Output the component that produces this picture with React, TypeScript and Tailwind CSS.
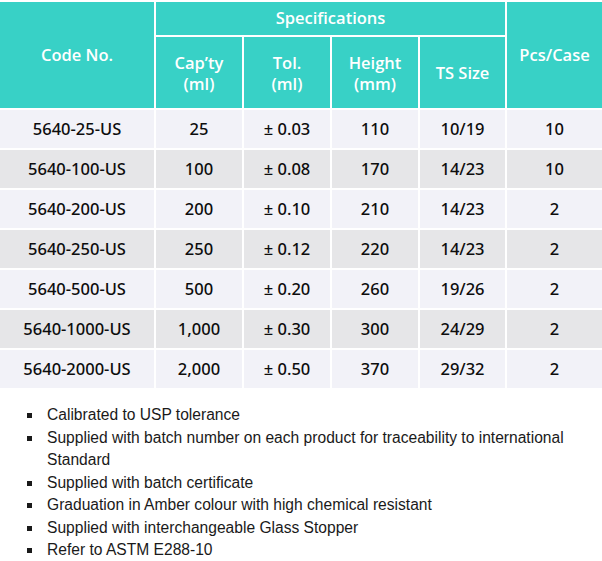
import React from 'react';

type Row = {
    code: string;
    cap: string;
    tol: string;
    height: string;
    ts: string;
    pcs: string;
};

const rows: Row[] = [
    { code: '5640-25-US', cap: '25', tol: '± 0.03', height: '110', ts: '10/19', pcs: '10' },
    { code: '5640-100-US', cap: '100', tol: '± 0.08', height: '170', ts: '14/23', pcs: '10' },
    { code: '5640-200-US', cap: '200', tol: '± 0.10', height: '210', ts: '14/23', pcs: '2' },
    { code: '5640-250-US', cap: '250', tol: '± 0.12', height: '220', ts: '14/23', pcs: '2' },
    { code: '5640-500-US', cap: '500', tol: '± 0.20', height: '260', ts: '19/26', pcs: '2' },
    { code: '5640-1000-US', cap: '1,000', tol: '± 0.30', height: '300', ts: '24/29', pcs: '2' },
    { code: '5640-2000-US', cap: '2,000', tol: '± 0.50', height: '370', ts: '29/32', pcs: '2' },
];

const notes = [
    'Calibrated to USP tolerance',
    'Supplied with batch number on each product for traceability to international Standard',
    'Supplied with batch certificate',
    'Graduation in Amber colour with high chemical resistant',
    'Supplied with interchangeable Glass Stopper',
    'Refer to ASTM E288-10',
];

const th = 'border-2 border-white bg-[#38d1c6] text-white font-semibold text-[16.5px] text-center align-middle leading-[21px] p-0';
// body cells: Noto Sans medium comes closer to the slightly heavy digits
const td = "border-2 border-white text-center align-middle text-[#0d0d0d] font-medium text-[16.5px] p-0 h-[40px] font-['Noto_Sans','Open_Sans',sans-serif]";

export default function App() {
    return (
        <div className="w-[602px] bg-white" style={{ fontFamily: '"Open Sans", "Noto Sans", sans-serif' }}>
            <table className="w-[602px] border-collapse table-fixed">
                <colgroup>
                    <col className="w-[155px]" />
                    <col className="w-[88px]" />
                    <col className="w-[88px]" />
                    <col className="w-[88px]" />
                    <col className="w-[87px]" />
                    <col className="w-[96px]" />
                </colgroup>
                <thead>
                    <tr className="h-[35px]">
                        <th rowSpan={2} className={`${th} border-l-0 pb-[2px]`}>Code No.</th>
                        <th colSpan={4} className={`${th} pb-[2px]`}>Specifications</th>
                        <th rowSpan={2} className={`${th} border-r-0 pb-[2px]`}>Pcs/Case</th>
                    </tr>
                    <tr className="h-[73px]">
                        <th className={th}>Cap’ty<br />(ml)</th>
                        <th className={th}>Tol.<br />(ml)</th>
                        <th className={th}>Height<br />(mm)</th>
                        <th className={th}>TS Size</th>
                    </tr>
                </thead>
                <tbody>
                    {rows.map((r, i) => (
                        <tr key={r.code} className={i % 2 === 0 ? 'bg-[#f2f2f8]' : 'bg-[#e6e6e8]'}>
                            <td className={`${td} border-l-0`}>{r.code}</td>
                            <td className={td}>{r.cap}</td>
                            <td className={td}>{r.tol}</td>
                            <td className={td}>{r.height}</td>
                            <td className={td}>{r.ts}</td>
                            <td className={`${td} border-r-0`}>{r.pcs}</td>
                        </tr>
                    ))}
                </tbody>
            </table>

            <ul
                className="mt-[14px] pl-[27px] pr-[20px] text-[15.6px] leading-[22.5px] text-[#1a1a1a]"
                style={{ fontFamily: '"Liberation Sans", Arial, sans-serif' }}
            >
                {notes.map((n) => (
                    <li key={n} className="flex">
                        <span className="w-[20px] shrink-0 pt-[9px]">
                            <span className="block w-[5px] h-[5px] bg-[#1a1a1a]" />
                        </span>
                        <span>{n}</span>
                    </li>
                ))}
            </ul>
        </div>
    );
}
